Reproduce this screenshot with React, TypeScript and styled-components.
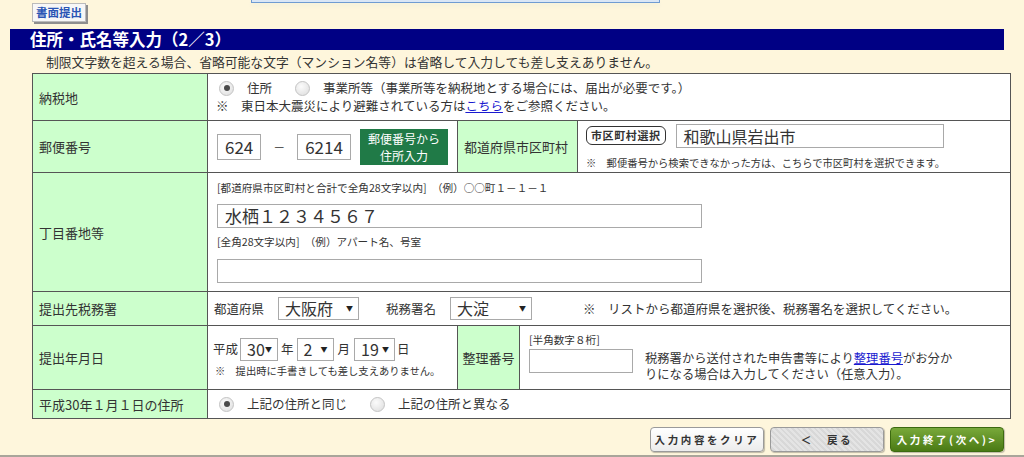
import React from 'react';
import styled, { createGlobalStyle } from 'styled-components';

const GlobalStyle = createGlobalStyle`
  html, body {
    margin: 0;
    padding: 0;
    background: #fef6dc;
    overflow: hidden;
  }
  body {
    font-family: "Noto Sans CJK JP", "Noto Sans", sans-serif;
    color: #333;
  }
`;

const Page = styled.div`
  height: 455px;
  border-bottom: 2px solid #a9a59a;
  background: #fef6dc;
`;

const TopRow = styled.div`
  display: flex;
  align-items: flex-start;
  height: 25px;
`;

const PaperButton = styled.div`
  margin: 3px 0 0 32px;
  width: 54px;
  height: 19px;
  box-sizing: border-box;
  background: #f7f7f7;
  border: 1px solid #bbb;
  box-shadow: 2px 2px 0 #8e8e8e;
  color: #2a55b5;
  font-size: 11.5px;
  font-weight: bold;
  line-height: 17px;
  text-align: center;
`;

const InfoBox = styled.div`
  margin-left: 165px;
  width: 407px;
  height: 2px;
  background: #d9e6f6;
  border: 1px solid #6f9bd2;
  border-top: none;
  box-shadow: 0 3px 4px #f3f0dc;
`;

const TitleBar = styled.h1`
  margin: 4px 20px 0 10px;
  height: 21px;
  background: #000084;
  color: #fff;
  font-size: 16.5px;
  font-weight: bold;
  line-height: 21px;
  padding-left: 20px;
`;

const Lead = styled.p`
  margin: 4px 0 0 46px;
  height: 16px;
  font-size: 12.8px;
  line-height: 16px;
  color: #333;
`;

const FormTable = styled.table`
  margin: 3px 0 0 32px;
  width: 979px;
  border-collapse: collapse;
  table-layout: fixed;
  border: 1px solid #333;
  font-size: 12.5px;
`;

const Label = styled.td<{ $center?: boolean }>`
  background: #ccffcc;
  border: 1px solid #555;
  padding: 0 ${({ $center }) => ($center ? 0 : 6)}px;
  vertical-align: middle;
  text-align: ${({ $center }) => ($center ? 'center' : 'left')};
  font-size: 13px;
  color: #333;
  white-space: nowrap;
`;

const Value = styled.td<{ $pad?: number }>`
  background: #fff;
  border: 1px solid #555;
  padding: 0 ${({ $pad }) => $pad ?? 8}px;
  vertical-align: middle;
  color: #333;
`;

const Line = styled.div`
  display: flex;
  align-items: center;
  line-height: 18px;
  white-space: nowrap;
`;

const RadioItem = styled.label`
  display: inline-flex;
  align-items: center;
  gap: 13px;
  margin-left: 3px;
  margin-right: 20px;
`;

const RadioDot = styled.span<{ $on?: boolean }>`
  position: relative;
  width: 13px;
  height: 13px;
  border-radius: 50%;
  border: 1px solid #c4c4c4;
  background: radial-gradient(circle at 40% 35%, #fbfbfb, #dcdcdc);
  &::after {
    content: '';
    display: ${({ $on }) => ($on ? 'block' : 'none')};
    position: absolute;
    left: 3.5px;
    top: 3.5px;
    width: 6px;
    height: 6px;
    border-radius: 50%;
    background: #4a4a4a;
  }
`;

const Link = styled.a`
  color: #1a1ad0;
  text-decoration: underline;
`;

const TextBox = styled.div<{ $w: number; $h?: number; $size?: number }>`
  box-sizing: border-box;
  width: ${({ $w }) => $w}px;
  height: ${({ $h }) => $h ?? 24}px;
  border: 1px solid #a9a9a9;
  background: #fff;
  padding: 0 7px;
  font-size: ${({ $size }) => $size ?? 17}px;
  line-height: ${({ $h }) => ($h ?? 24) - 2}px;
  color: #333;
  white-space: nowrap;
  overflow: hidden;
`;

const Dash = styled.span`
  margin: 0 12px;
  font-size: 12px;
`;

const ZipButton = styled.div`
  margin-left: 9px;
  width: 94px;
  height: 36px;
  background: #207a47;
  color: #fff;
  font-size: 12px;
  line-height: 17px;
  text-align: center;
  display: flex;
  flex-direction: column;
  justify-content: center;
`;

const Badge = styled.span`
  display: inline-block;
  box-sizing: border-box;
  height: 19px;
  padding: 0 4px;
  border: 1.5px solid #333;
  border-radius: 6px;
  font-size: 11px;
  font-weight: bold;
  letter-spacing: 0.6px;
  line-height: 16px;
  margin-right: 10px;
`;

const Note = styled.div<{ $indent?: number }>`
  font-size: 10.3px;
  line-height: 14px;
  margin-left: ${({ $indent }) => $indent ?? 0}px;
  white-space: nowrap;
`;

const Hint = styled.div`
  font-size: 10.6px;
  line-height: 14px;
  white-space: nowrap;
`;

const Stack = styled.div<{ $gap?: number }>`
  display: flex;
  flex-direction: column;
  gap: ${({ $gap }) => $gap ?? 0}px;
`;

const Spacer = styled.div<{ $h: number }>`
  height: ${({ $h }) => $h}px;
`;

const Select = styled.div<{ $w: number }>`
  box-sizing: border-box;
  width: ${({ $w }) => $w}px;
  height: 23px;
  border: 1px solid #a9a9a9;
  background: #fff;
  display: flex;
  align-items: center;
  justify-content: space-between;
  padding: 0 5px 0 6px;
  font-size: 16px;
  line-height: 21px;
  color: #333;
  &::after {
    content: '▼';
    font-size: 7px;
    color: #222;
  }
`;

const Unit = styled.span<{ $l?: number; $r?: number }>`
  margin: 0 ${({ $r }) => $r ?? 0}px 0 ${({ $l }) => $l ?? 0}px;
`;

const NumberRow = styled.div`
  display: flex;
  align-items: flex-start;
  gap: 12px;
`;

const Explain = styled.div`
  font-size: 12.3px;
  line-height: 16px;
  padding-top: 1px;
`;

const Footer = styled.div`
  display: flex;
  justify-content: flex-end;
  gap: 6px;
  margin: 8px 20px 0 0;
`;

const ActionButton = styled.div<{ $kind: 'clear' | 'back' | 'next' }>`
  box-sizing: border-box;
  width: 114px;
  height: 25px;
  border-radius: 4px;
  font-size: 10.5px;
  font-weight: bold;
  letter-spacing: 2.6px;
  line-height: 23px;
  text-align: center;
  border: 1px solid ${({ $kind }) => ($kind === 'next' ? '#3d6a10' : '#9a9a9a')};
  color: ${({ $kind }) => ($kind === 'next' ? '#fff' : '#333')};
  background: ${({ $kind }) =>
    $kind === 'next'
      ? 'linear-gradient(#79a93a, #4a7a14)'
      : $kind === 'back'
      ? 'repeating-linear-gradient(45deg, #e4e4e4 0 2px, #d8d8d8 2px 4px)'
      : 'linear-gradient(#ffffff, #ececec)'};
  box-shadow: 1px 1px 1px rgba(0, 0, 0, 0.25);
`;

const Radio = ({ on, children }: { on?: boolean; children: React.ReactNode }) => (
  <RadioItem>
    <RadioDot $on={on} />
    <span>{children}</span>
  </RadioItem>
);

export default function App() {
  return (
    <Page>
      <GlobalStyle />
      <TopRow>
        <PaperButton>書面提出</PaperButton>
        <InfoBox />
      </TopRow>
      <TitleBar>住所・氏名等入力（2／3）</TitleBar>
      <Lead>制限文字数を超える場合、省略可能な文字（マンション名等）は省略して入力しても差し支えありません。</Lead>

      <FormTable>
        <colgroup>
          <col style={{ width: 175 }} />
          <col style={{ width: 250 }} />
          <col style={{ width: 62 }} />
          <col style={{ width: 58 }} />
          <col />
        </colgroup>
        <tbody>
          <tr style={{ height: 47 }}>
            <Label>納税地</Label>
            <Value colSpan={4}>
              <Line>
                <Radio on>住所</Radio>
                <Radio>事業所等（事業所等を納税地とする場合には、届出が必要です。）</Radio>
              </Line>
              <Line>
                ※　東日本大震災により避難されている方は<Link>こちら</Link>をご参照ください。
              </Line>
            </Value>
          </tr>
          <tr style={{ height: 52 }}>
            <Label>郵便番号</Label>
            <Value $pad={9}>
              <Line>
                <TextBox $w={46} $h={26}>624</TextBox>
                <Dash>－</Dash>
                <TextBox $w={56} $h={26}>6214</TextBox>
                <ZipButton>
                  <span>郵便番号から</span>
                  <span>住所入力</span>
                </ZipButton>
              </Line>
            </Value>
            <Label colSpan={2}>都道府県市区町村</Label>
            <Value>
              <Stack $gap={8}>
                <Line>
                  <Badge>市区町村選択</Badge>
                  <TextBox $w={268} $size={16}>和歌山県岩出市</TextBox>
                </Line>
                <Note>※　郵便番号から検索できなかった方は、こちらで市区町村を選択できます。</Note>
              </Stack>
            </Value>
          </tr>
          <tr style={{ height: 119 }}>
            <Label>丁目番地等</Label>
            <Value colSpan={4} $pad={9}>
              <Stack>
                <Hint>[都道府県市区町村と合計で全角28文字以内]　（例）○○町１－１－１</Hint>
                <Spacer $h={9} />
                <TextBox $w={485}>水栖１２３４５６７</TextBox>
                <Spacer $h={7} />
                <Hint>[全角28文字以内]　（例）アパート名、号室</Hint>
                <Spacer $h={10} />
                <TextBox $w={485} />
              </Stack>
            </Value>
          </tr>
          <tr style={{ height: 34 }}>
            <Label>提出先税務署</Label>
            <Value colSpan={4} $pad={6}>
              <Line>
                <Unit $r={14}>都道府県</Unit>
                <Select $w={81}>大阪府</Select>
                <Unit $l={27} $r={14}>税務署名</Unit>
                <Select $w={82}>大淀</Select>
                <Unit $l={51}>※　リストから都道府県を選択後、税務署名を選択してください。</Unit>
              </Line>
            </Value>
          </tr>
          <tr style={{ height: 64 }}>
            <Label>提出年月日</Label>
            <Value $pad={5}>
              <Stack $gap={3}>
                <Line>
                  <Unit $r={2}>平成</Unit>
                  <Select $w={38}>30</Select>
                  <Unit $l={3} $r={3}>年</Unit>
                  <Select $w={37}>2</Select>
                  <Unit $l={4} $r={4}>月</Unit>
                  <Select $w={41}>19</Select>
                  <Unit $l={2}>日</Unit>
                </Line>
                <Note $indent={2}>※　提出時に手書きしても差し支えありません。</Note>
              </Stack>
            </Value>
            <Label $center>整理番号</Label>
            <Value colSpan={2} $pad={9}>
              <Stack $gap={2}>
                <Hint>[半角数字８桁]</Hint>
                <NumberRow>
                  <TextBox $w={104} />
                  <Explain>
                    税務署から送付された申告書等により<Link>整理番号</Link>がお分か
                    <br />
                    りになる場合は入力してください（任意入力）。
                  </Explain>
                </NumberRow>
              </Stack>
            </Value>
          </tr>
          <tr style={{ height: 29 }}>
            <Label>平成30年１月１日の住所</Label>
            <Value colSpan={4}>
              <Line>
                <Radio on>上記の住所と同じ</Radio>
                <Radio>上記の住所と異なる</Radio>
              </Line>
            </Value>
          </tr>
        </tbody>
      </FormTable>

      <Footer>
        <ActionButton $kind="clear">入力内容をクリア</ActionButton>
        <ActionButton $kind="back">＜　戻る</ActionButton>
        <ActionButton $kind="next">入力終了(次へ)&gt;</ActionButton>
      </Footer>
    </Page>
  );
}
